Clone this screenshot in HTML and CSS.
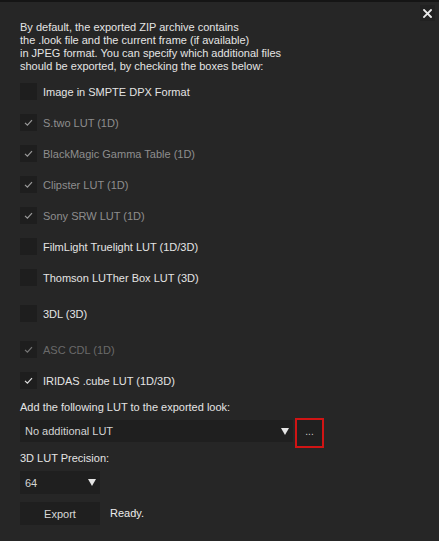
FILE: index.html
```html
<!DOCTYPE html>
<html>
<head>
<meta charset="utf-8">
<link rel="stylesheet" href="styles.css">
</head>
<body>
<div class="dialog">
  <div class="topline"></div>
  <button class="close" aria-label="Close">
    <svg width="9" height="9" viewBox="0 0 9 9"><path d="M1 1L8 8M8 1L1 8" stroke="#e8e8e8" stroke-width="1.8" stroke-linecap="square"/></svg>
  </button>
  <div class="content">
    <p class="intro">By default, the exported ZIP archive contains<br>the .look file and the current frame (if available)<br>in JPEG format. You can specify which additional files<br>should be exported, by checking the boxes below:</p>

    <div class="checks">
      <div class="row"><span class="box"></span><span class="lbl">Image in SMPTE DPX Format</span></div>
      <div class="row disabled"><span class="box"><svg class="tick" viewBox="0 0 17 17"><path d="M5 8.8L7.4 11.2L12 6.2" /></svg></span><span class="lbl">S.two LUT (1D)</span></div>
      <div class="row disabled"><span class="box"><svg class="tick" viewBox="0 0 17 17"><path d="M5 8.8L7.4 11.2L12 6.2" /></svg></span><span class="lbl">BlackMagic Gamma Table (1D)</span></div>
      <div class="row disabled"><span class="box"><svg class="tick" viewBox="0 0 17 17"><path d="M5 8.8L7.4 11.2L12 6.2" /></svg></span><span class="lbl">Clipster LUT (1D)</span></div>
      <div class="row disabled"><span class="box"><svg class="tick" viewBox="0 0 17 17"><path d="M5 8.8L7.4 11.2L12 6.2" /></svg></span><span class="lbl">Sony SRW LUT (1D)</span></div>
      <div class="row"><span class="box"></span><span class="lbl">FilmLight Truelight LUT (1D/3D)</span></div>
      <div class="row"><span class="box"></span><span class="lbl">Thomson LUTher Box LUT (3D)</span></div>
      <div class="row extra"><span class="box"></span><span class="lbl">3DL (3D)</span></div>
      <div class="row dim extra"><span class="box"><svg class="tick" viewBox="0 0 17 17"><path d="M5 8.8L7.4 11.2L12 6.2" /></svg></span><span class="lbl">ASC CDL (1D)</span></div>
      <div class="row on"><span class="box"><svg class="tick" viewBox="0 0 17 17"><path d="M5 8.8L7.4 11.2L12 6.2" /></svg></span><span class="lbl">IRIDAS .cube LUT (1D/3D)</span></div>
    </div>

    <div class="label lutlabel">Add the following LUT to the exported look:</div>
    <div class="lutline">
      <div class="combo wide"><span>No additional LUT</span><span class="arrow"></span></div>
      <button class="more">...</button>
    </div>

    <div class="label preclabel">3D LUT Precision:</div>
    <div class="combo small"><span>64</span><span class="arrow"></span></div>

    <div class="exportline">
      <button class="export">Export</button>
      <span class="status">Ready.</span>
    </div>
  </div>
</div>
</body>
</html>
```

FILE: styles.css
```css
* { box-sizing: border-box; }
html, body { margin: 0; padding: 0; }
body {
  width: 439px;
  height: 541px;
  background: #262626;
  font-family: "Liberation Sans", Arial, sans-serif;
  font-size: 11px;
  color: #e4e4e4;
  overflow: hidden;
}
.dialog {
  position: relative;
  width: 439px;
  height: 541px;
}
.topline {
  height: 2px;
  background: #151515;
}
.close {
  position: absolute;
  top: 5px;
  left: 420px;
  width: 15px;
  height: 16px;
  background: #212121;
  border: none;
  padding: 0;
  display: flex;
  align-items: center;
  justify-content: center;
}
.content {
  padding: 0 20px;
}
.intro {
  margin: 19px 0 0;
  line-height: 13px;
}
.checks {
  margin-top: 10px;
  display: flex;
  flex-direction: column;
  gap: 14px;
}
.row {
  display: flex;
  align-items: center;
  height: 17px;
}
.row.extra { margin-top: 5px; }
.box {
  width: 17px;
  height: 17px;
  background: #1e1e1e;
  flex: none;
  display: flex;
}
.lbl { margin-left: 6px; }
.tick {
  width: 17px;
  height: 17px;
  fill: none;
  stroke: #9a9a9a;
  stroke-width: 1.2;
}
.row.disabled .lbl { color: #8e8e8e; }
.row.dim .lbl { color: #6a6a6a; }
.row.dim .tick { stroke: #777; }
.row.on .tick { stroke: #e0e0e0; }
.label {
  line-height: 13px;
}
.lutlabel { margin-top: 12px; }
.lutline {
  display: flex;
  align-items: flex-start;
  margin-top: 4px;
  height: 30px;
}
.combo {
  background: #1f1f1f;
  display: flex;
  align-items: center;
  justify-content: space-between;
  padding: 0 4px 0 5px;
  color: #d4d4d4;
}
.combo.wide { width: 273px; height: 22px; margin-top: 2px; }
.combo.small { width: 80px; height: 23px; margin-top: 6px; }
.arrow {
  width: 0;
  height: 0;
  border-left: 4px solid transparent;
  border-right: 4px solid transparent;
  border-top: 7px solid #e4e4e4;
}
.more {
  margin-left: 2px;
  width: 29px;
  height: 30px;
  background: #202020;
  border: 2px solid #d01414;
  color: #cfcfcf;
  font: inherit;
  font-size: 10px;
  padding: 0 0 3px;
  line-height: 1;
}
.preclabel { margin-top: 4px; }
.exportline {
  display: flex;
  align-items: center;
  margin-top: 8px;
}
.export {
  width: 80px;
  height: 23px;
  background: #1f1f1f;
  border: none;
  color: #d8d8d8;
  font: inherit;
  padding: 0;
}
.status {
  margin-left: 10px;
  color: #ececec;
  position: relative;
  top: -1px;
}
```
